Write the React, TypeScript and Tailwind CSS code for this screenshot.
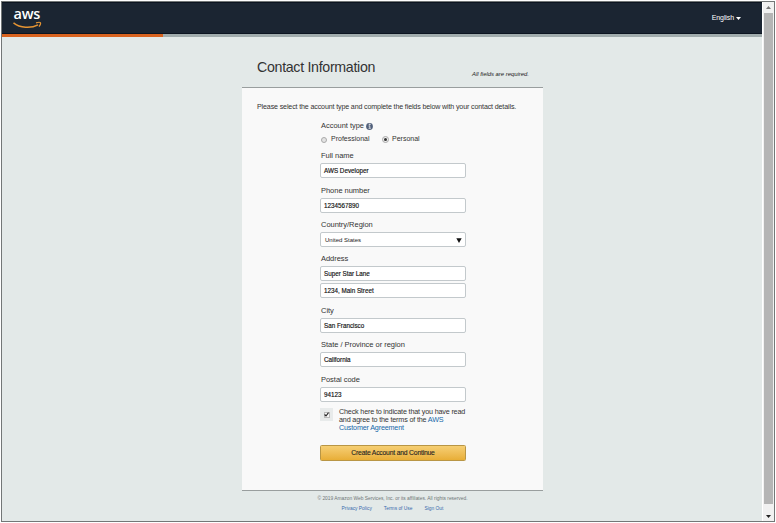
import React from 'react';

type FieldProps = { label: string; children: React.ReactNode; className?: string };

const boxClass =
  'flex h-[15px] w-[146px] items-center rounded-[2px] border border-[#c3c9cc] bg-white px-[3px] pt-px text-[6.3px] leading-none text-[#111] [-webkit-text-stroke:0.15px_#111] whitespace-nowrap';

function Field({ label, children, className = 'h-[34.4px]' }: FieldProps) {
  return (
    <div className={className}>
      <div className="h-[15px] pl-px text-[7.5px] leading-[15px] tracking-[-0.03px] text-[#333] whitespace-nowrap">{label}</div>
      {children}
    </div>
  );
}

function Box({ value, className = '' }: { value: string; className?: string }) {
  return <div className={`${boxClass} ${className}`}>{value}</div>;
}

function AwsLogo() {
  return (
    <div className="ml-[11px] mt-[3px] h-[24px] w-[30px]">
      <div className="h-[15px] pl-[0.5px] font-['Open_Sans',sans-serif] text-[14.5px] font-semibold leading-[15px] tracking-[-0.2px] text-white">aws</div>
      <svg className="block" width="30" height="9" viewBox="0 0 30 9" fill="none" stroke="#e59433">
        <path d="M.5 1.8C7 7 18 7.6 25 3.8" strokeWidth="1.5" />
        <path d="M23 1.8C27.5.6 29.2 1.3 26 5.6" strokeWidth="1.2" />
      </svg>
    </div>
  );
}

export default function App() {
  return (
    <div className="h-[523px] w-[776px] overflow-hidden bg-white pl-px pt-px font-['Liberation_Sans',Arial,sans-serif]">
      <div className="flex h-[521px] w-[774px] border border-[#737777] bg-white">
        <div className="flex w-[760px] flex-col bg-[#e3e9e8]">
          <header className="flex h-[32px] shrink-0 justify-between border-y border-[#0c1420] bg-[#1b2532]">
            <AwsLogo />
            <div className="mr-[21px] flex h-[30px] items-center gap-[2px] text-[7px] tracking-[-0.1px] text-white">
              English
              <svg width="5" height="3" viewBox="0 0 5 3"><path d="M0 0h5L2.5 3z" fill="white" /></svg>
            </div>
          </header>
          <div className="flex h-[3px] shrink-0 bg-[#a1acad]"><div className="w-[161px] bg-[#d9631f]" /></div>
          <main className="ml-[240px] w-[301px]">
            <div className="flex h-[50px] justify-between pl-[15px] pr-[14px]">
              <h1 className="pt-[20px] text-[14.2px] leading-[20px] tracking-[-0.3px] text-[#333] whitespace-nowrap">Contact Information</h1>
              <div className="pt-[32px] text-[5.9px] italic leading-[10px] text-[#222] whitespace-nowrap">All fields are required.</div>
            </div>
            <section className="h-[404px] border-y border-[#999e9e] bg-[#f9f9f9] pt-[13px]">
              <p className="pl-[15px] text-[7.1px] leading-[12px] tracking-[-0.14px] text-[#333] whitespace-nowrap">Please select the account type and complete the fields below with your contact details.</p>
              <form className="ml-[78px] w-[146px] pt-[6px]">
                <div className="flex h-[14px] items-center gap-[2px] pl-px text-[7.45px] text-[#333]">
                  Account type
                  <svg width="7" height="7" viewBox="0 0 7 7"><circle cx="3.5" cy="3.5" r="3.4" fill="#51607b" /><path d="M2.5 3h1.3v2.3M2.5 5.3h2.3M3.2 1.1h1v.9h-1z" stroke="white" strokeWidth=".7" fill="none" /></svg>
                </div>
                <div className="flex h-[13px] items-center text-[7px] text-[#333]">
                  <span className="ml-px mr-[4px] size-[6px] rounded-full border border-[#aaa] bg-[#e4e4e4]" />
                  <span className="w-[51px]">Professional</span>
                  <span className="mr-[3px] flex size-[7px] items-center justify-center rounded-full border border-[#aaa] bg-[#eee]"><span className="size-[3px] rounded-full bg-[#333]" /></span>
                  Personal
                </div>
                <div className="pt-[2.3px]">
                  <Field label="Full name"><Box value="AWS Developer" /></Field>
                  <Field label="Phone number"><Box value="1234567890" /></Field>
                  <Field label="Country/Region">
                    <div className={`${boxClass} justify-between`}>
                      <span className="pl-px text-[6px] text-[#222] [-webkit-text-stroke:0px]">United States</span>
                      <svg width="6" height="5" viewBox="0 0 6 5"><path d="M.3.3h5.4L3 5z" fill="#111" /></svg>
                    </div>
                  </Field>
                  <Field label="Address" className="h-[51.5px]">
                    <Box value="Super Star Lane" />
                    <Box value="1234, Main Street" className="mt-[2px]" />
                  </Field>
                  <Field label="City"><Box value="San Francisco" /></Field>
                  <Field label="State / Province or region"><Box value="California" /></Field>
                  <Field label="Postal code"><Box value="94123" /></Field>
                </div>
                <div className="flex h-[25px] pt-px">
                  <div className="mt-px flex size-[13px] shrink-0 items-center justify-center bg-[#e8ebeb]">
                    <span className="flex size-[6px] items-center justify-center border border-[#bbb] bg-[#f7f7f7]">
                      <svg className="shrink-0" width="5" height="5" viewBox="0 0 5 5"><path d="M.6 2.5 2 4 4.5.6" stroke="#222" strokeWidth="1.1" fill="none" /></svg>
                    </span>
                  </div>
                  <p className="ml-[6px] pt-[1.2px] text-[7.2px] leading-[7.6px] tracking-[-0.17px] text-[#333] whitespace-nowrap">Check here to indicate that you have read<br />and agree to the terms of the <a className="text-[#1468a8]">AWS</a><br /><a className="text-[#1468a8]">Customer Agreement</a></p>
                </div>
                <button type="button" className="mt-[13.7px] flex h-[16px] w-[146px] items-center justify-center rounded-[1.5px] border border-[#b99645] bg-gradient-to-b from-[#f6cf73] to-[#e8ae35] pt-[2px] text-[6.8px] leading-none tracking-[-0.2px] text-[#222] [-webkit-text-stroke:0.1px_#222] whitespace-nowrap">Create Account and Continue</button>
              </form>
            </section>
            <footer className="text-center text-[4.87px] text-[#6e7676]">
              <div className="pt-[3px] leading-[9px]">© 2019 Amazon Web Services, Inc. or its affiliates. All rights reserved.</div>
              <div className="flex justify-center gap-[12px] leading-[11px] text-[#3969ad]"><a>Privacy Policy</a><a>Terms of Use</a><a>Sign Out</a></div>
            </footer>
          </main>
        </div>
        <div className="flex w-[12px] flex-col items-center border-l border-white bg-[#f1f1f1]">
          <div className="flex h-[11px] items-center"><svg width="5" height="3" viewBox="0 0 5 3"><path d="M0 3h5L2.5 0z" fill="#777" /></svg></div>
          <div className="h-[491px] w-[9px] bg-[#b5b5b5]" />
          <div className="flex flex-1 items-center pt-[8px]"><svg width="5" height="3" viewBox="0 0 5 3"><path d="M0 0h5L2.5 3z" fill="#222" /></svg></div>
        </div>
      </div>
    </div>
  );
}
